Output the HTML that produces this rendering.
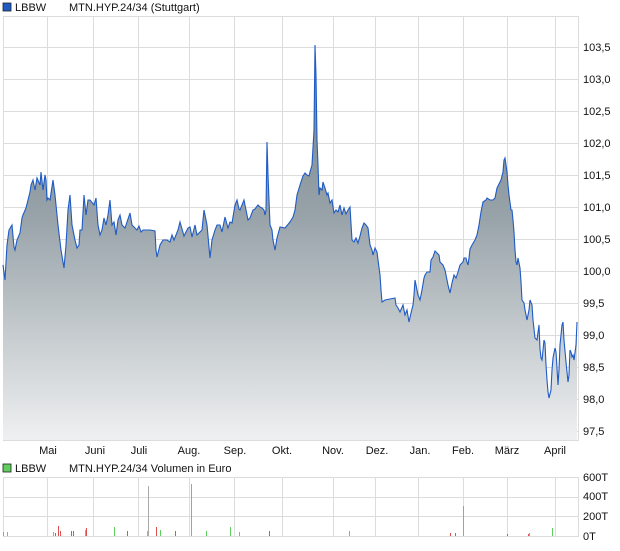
<!DOCTYPE html>
<html><head><meta charset="utf-8"><style>
body{margin:0;background:#fff;width:620px;height:546px;overflow:hidden;font-family:"Liberation Sans",sans-serif;}
svg text{font-family:"Liberation Sans",sans-serif;font-size:11px;fill:#111;}
</style></head><body>
<svg width="620" height="546" viewBox="0 0 620 546">
<defs><linearGradient id="g" x1="0" y1="40" x2="0" y2="440" gradientUnits="userSpaceOnUse">
<stop offset="0" stop-color="#6f7d85"/><stop offset="0.45" stop-color="#99a4aa"/><stop offset="1" stop-color="#eff0f1"/></linearGradient></defs>
<rect x="3" y="3" width="8" height="8" fill="#1f5bc4" stroke="#222" stroke-width="0.8"/>
<text x="15" y="11">LBBW</text><text x="69" y="11">MTN.HYP.24/34 (Stuttgart)</text>
<g stroke="#dcdcdc" stroke-width="1" fill="none">
<rect x="3.5" y="16.5" width="575" height="424"/>
<path d="M47.5 16V440M93.5 16V440M138.5 16V440M189.5 16V440M234.5 16V440M282.5 16V440M333.5 16V440M375.5 16V440M418.5 16V440M463.5 16V440M507.5 16V440M555.5 16V440"/>
<path d="M3 47.5H578M3 79.5H578M3 111.5H578M3 143.5H578M3 175.5H578M3 207.5H578M3 239.5H578M3 271.5H578M3 303.5H578M3 335.5H578M3 367.5H578M3 399.5H578M3 431.5H578"/>
</g>
<path id="p" fill="url(#g)" stroke="none" d="M3 440L3 265L5 280L7 245L9 230L12 225L14 247L15 250L17 240L20 233L22 218L23 215L26 208L28 200L30 192L31 185L33 180L35 190L37 178L40 185L41 172L43 190L45 175L46 180L47 200L48 198L50 200L53 180L55 195L58 225L61 250L63 262L64 268L66 245L68 210L70 195L72 225L75 240L77 248L79 245L80 230L82 230L84 195L86 215L88 200L90 200L94 205L96 198L98 225L100 235L102 230L104 218L106 225L108 215L110 200L112 225L114 222L116 235L118 220L120 215L122 225L125 228L127 222L130 213L132 225L135 228L137 230L139 226L141 232L143 230L150 230L155 231L156 250L157 257L160 245L163 240L167 240L170 242L172 235L174 240L178 230L180 222L184 236L186 232L188 228L190 227L192 237L195 225L197 235L202 230L204 210L207 225L210 258L212 240L215 230L217 225L220 225L222 232L225 217L228 228L230 222L232 223L235 205L237 200L239 209L240 210L244 200L248 220L250 218L253 210L255 209L258 205L260 207L262 208L264 210L265 215L266 210L267 142L268 175L270 225L272 230L273 240L275 250L277 238L280 227L285 228L290 222L293 217L295 210L297 195L300 185L303 176L305 173L307 175L309 176L310 172L312 165L314 130L315 45L316 75L317 140L318 165L319 195L320 188L322 190L323 182L325 188L327 195L328 193L330 203L332 200L334 213L336 210L338 212L340 205L342 215L344 208L346 214L348 210L350 207L352 240L354 242L356 238L358 243L360 236L362 228L364 223L366 225L368 228L370 245L372 250L373 255L375 248L377 252L378 260L380 275L381 290L382 302L385 300L395 298L396 305L398 308L400 312L403 305L405 315L407 310L409 322L411 313L413 305L414 295L415 280L416 285L418 295L420 300L422 290L424 278L425 275L427 272L430 272L431 260L433 257L435 251L437 253L439 255L440 262L443 265L445 270L447 280L448 285L450 293L452 283L454 275L456 278L458 272L460 265L463 262L464 258L466 258L467 262L468 265L469 258L470 249L472 245L475 240L477 235L479 225L481 212L483 202L486 200L487 198L490 200L493 200L495 198L497 188L499 184L501 180L503 172L504 160L505 158L506 165L507 172L508 185L509 195L511 210L512 210L513 220L514 232L515 250L516 262L517 265L518 258L520 268L521 282L522 300L524 303L525 310L527 320L529 310L530 300L532 305L533 320L535 338L537 340L539 325L540 349L541 358L542 360L544 340L545 343L546 365L547 380L548 392L549 398L551 390L552 370L553 358L555 348L556 352L557 368L558 385L559 370L560 345L562 325L563 322L564 340L566 362L568 382L569 375L570 350L571 352L572 357L573 355L574 360L576 345L577 322L577 440Z"/>
<path fill="none" stroke="#1f5bc4" stroke-width="1.1" d="M3 265L5 280L7 245L9 230L12 225L14 247L15 250L17 240L20 233L22 218L23 215L26 208L28 200L30 192L31 185L33 180L35 190L37 178L40 185L41 172L43 190L45 175L46 180L47 200L48 198L50 200L53 180L55 195L58 225L61 250L63 262L64 268L66 245L68 210L70 195L72 225L75 240L77 248L79 245L80 230L82 230L84 195L86 215L88 200L90 200L94 205L96 198L98 225L100 235L102 230L104 218L106 225L108 215L110 200L112 225L114 222L116 235L118 220L120 215L122 225L125 228L127 222L130 213L132 225L135 228L137 230L139 226L141 232L143 230L150 230L155 231L156 250L157 257L160 245L163 240L167 240L170 242L172 235L174 240L178 230L180 222L184 236L186 232L188 228L190 227L192 237L195 225L197 235L202 230L204 210L207 225L210 258L212 240L215 230L217 225L220 225L222 232L225 217L228 228L230 222L232 223L235 205L237 200L239 209L240 210L244 200L248 220L250 218L253 210L255 209L258 205L260 207L262 208L264 210L265 215L266 210L267 142L268 175L270 225L272 230L273 240L275 250L277 238L280 227L285 228L290 222L293 217L295 210L297 195L300 185L303 176L305 173L307 175L309 176L310 172L312 165L314 130L315 45L316 75L317 140L318 165L319 195L320 188L322 190L323 182L325 188L327 195L328 193L330 203L332 200L334 213L336 210L338 212L340 205L342 215L344 208L346 214L348 210L350 207L352 240L354 242L356 238L358 243L360 236L362 228L364 223L366 225L368 228L370 245L372 250L373 255L375 248L377 252L378 260L380 275L381 290L382 302L385 300L395 298L396 305L398 308L400 312L403 305L405 315L407 310L409 322L411 313L413 305L414 295L415 280L416 285L418 295L420 300L422 290L424 278L425 275L427 272L430 272L431 260L433 257L435 251L437 253L439 255L440 262L443 265L445 270L447 280L448 285L450 293L452 283L454 275L456 278L458 272L460 265L463 262L464 258L466 258L467 262L468 265L469 258L470 249L472 245L475 240L477 235L479 225L481 212L483 202L486 200L487 198L490 200L493 200L495 198L497 188L499 184L501 180L503 172L504 160L505 158L506 165L507 172L508 185L509 195L511 210L512 210L513 220L514 232L515 250L516 262L517 265L518 258L520 268L521 282L522 300L524 303L525 310L527 320L529 310L530 300L532 305L533 320L535 338L537 340L539 325L540 349L541 358L542 360L544 340L545 343L546 365L547 380L548 392L549 398L551 390L552 370L553 358L555 348L556 352L557 368L558 385L559 370L560 345L562 325L563 322L564 340L566 362L568 382L569 375L570 350L571 352L572 357L573 355L574 360L576 345L577 322"/>
<g>
<text x="583" y="51">103,5</text><text x="583" y="83">103,0</text><text x="583" y="115">102,5</text><text x="583" y="147">102,0</text><text x="583" y="179">101,5</text><text x="583" y="211">101,0</text><text x="583" y="243">100,5</text><text x="583" y="275">100,0</text><text x="583" y="307">99,5</text><text x="583" y="339">99,0</text><text x="583" y="371">98,5</text><text x="583" y="403">98,0</text><text x="583" y="435">97,5</text>
</g>
<g text-anchor="middle">
<text x="48" y="454">Mai</text><text x="95" y="454">Juni</text><text x="139" y="454">Juli</text><text x="189" y="454">Aug.</text><text x="235" y="454">Sep.</text><text x="282" y="454">Okt.</text><text x="333" y="454">Nov.</text><text x="377" y="454">Dez.</text><text x="420" y="454">Jan.</text><text x="463" y="454">Feb.</text><text x="507" y="454">März</text><text x="555" y="454">April</text>
</g>
<rect x="3" y="464" width="8" height="8" fill="#5fcf5f" stroke="#222" stroke-width="0.8"/>
<text x="15" y="472">LBBW</text><text x="69" y="472">MTN.HYP.24/34 Volumen in Euro</text>
<g stroke="#dcdcdc" stroke-width="1" fill="none">
<rect x="3.5" y="477.5" width="575" height="59"/>
<path d="M47.5 477V536M93.5 477V536M138.5 477V536M189.5 477V536M234.5 477V536M282.5 477V536M333.5 477V536M375.5 477V536M418.5 477V536M463.5 477V536M507.5 477V536M555.5 477V536M3 497.5H578M3 516.5H578"/>
</g>
<g stroke-width="1">
<path stroke="#5fcf5f" d="M3.5 536V532M7.5 536V532M53.5 536V532M85.5 536V530M114.5 536V527M160.5 536V530M191.5 536V484M206.5 536V531M230.5 536V527M239.5 536V532M349.5 536V531M529.5 536V533M552.5 536V528M463.5 536V506"/>
<path stroke="#e05050" d="M55.5 536V533M58.5 536V526M60.5 536V531M71.5 536V531M73.5 536V531M86.5 536V528M127.5 536V531M156.5 536V527M175.5 536V531M269.5 536V531M450.5 536V533M455.5 536V533M507.5 536V534M528.5 536V534"/>
<path stroke="#aaa" d="M148.5 536V486M147.5 536V531"/>
</g>
<g>
<text x="583" y="481">600T</text><text x="583" y="500">400T</text><text x="583" y="520">200T</text><text x="583" y="540">0T</text>
</g>
</svg>
</body></html>
